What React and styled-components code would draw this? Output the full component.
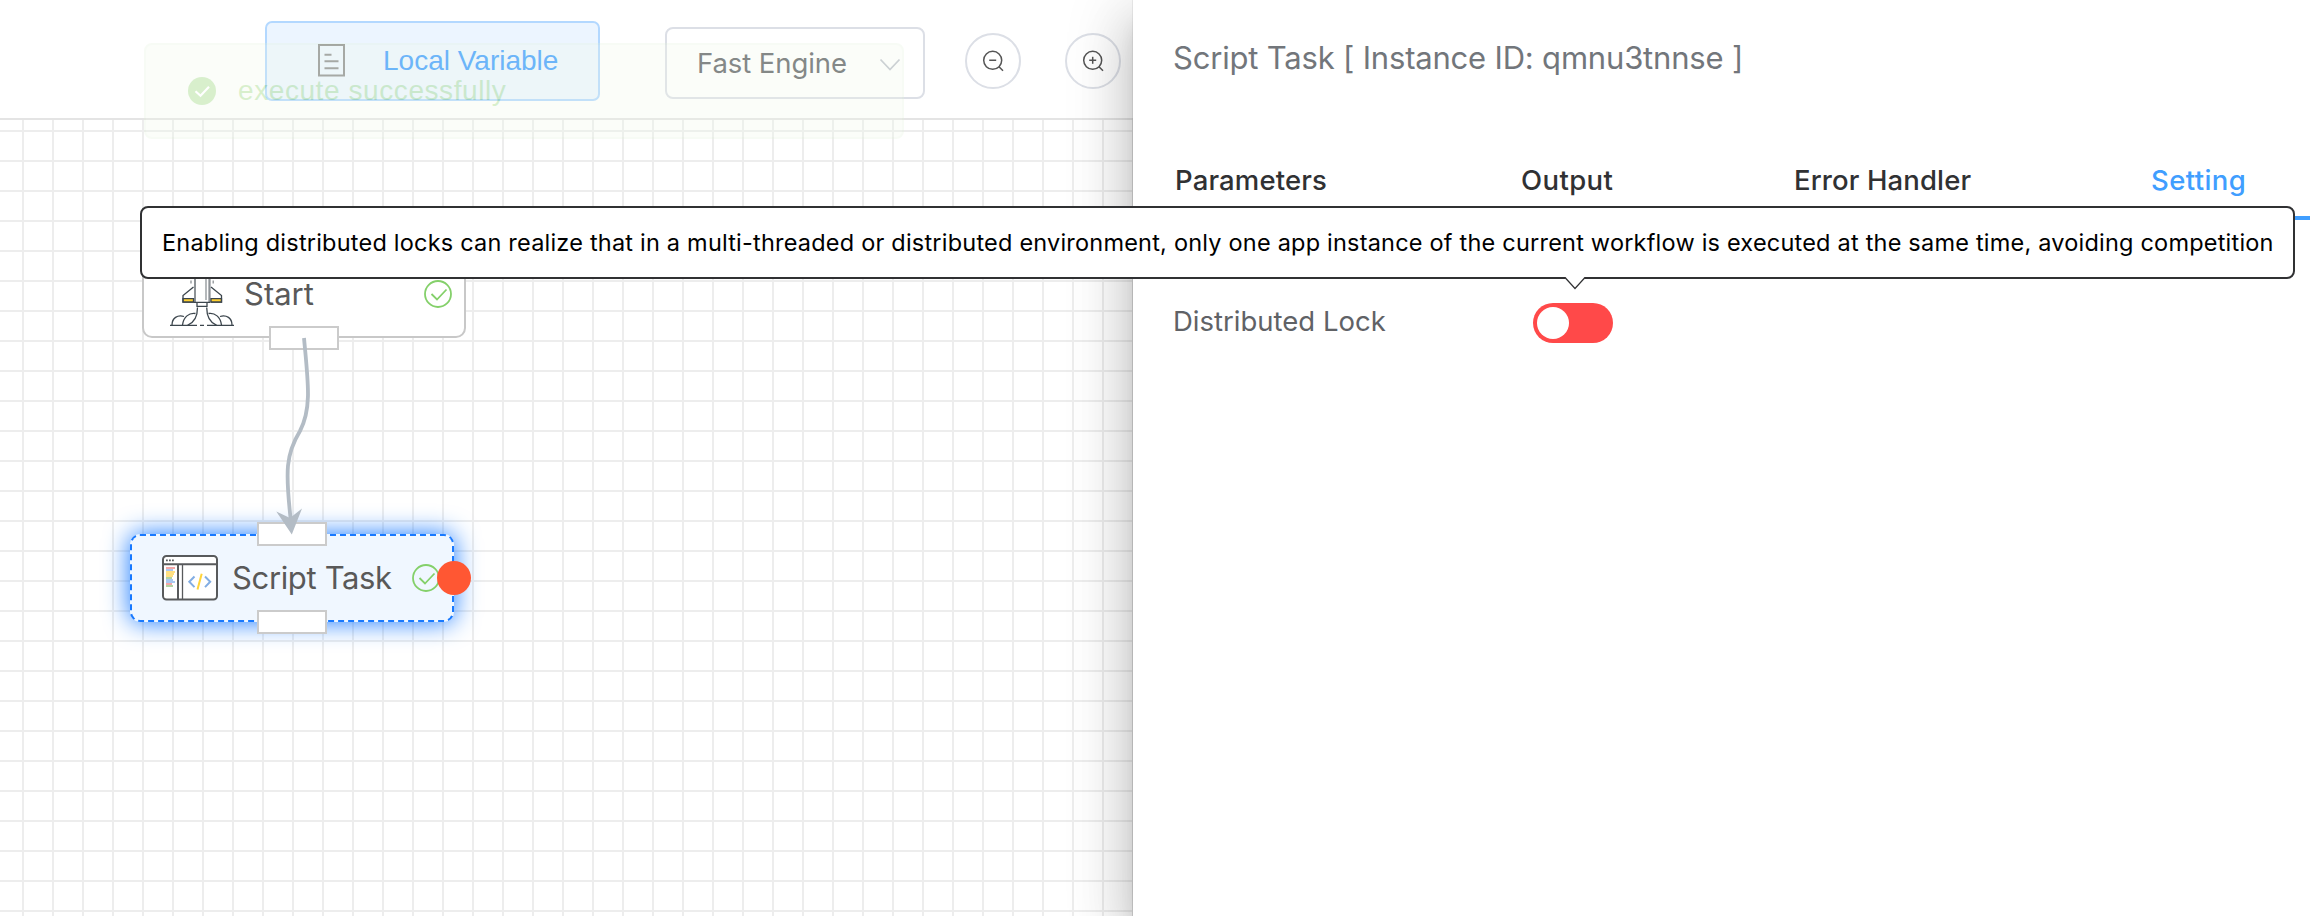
import React from "react";
import styled, { createGlobalStyle, css } from "styled-components";

const GlobalStyle = createGlobalStyle`
  *, *::before, *::after { box-sizing: border-box; }
  body {
    margin: 0;
    background: #fff;
    font-family: Inter, "Liberation Sans", sans-serif;
  }
`;

const Page = styled.div`
  position: relative;
  display: flex;
  width: 2310px;
  height: 916px;
  overflow: hidden;
  background: #fff;
`;

const Workspace = styled.main`
  position: relative;
  display: flex;
  flex-direction: column;
  width: 1133px;
  flex: none;
`;

const Toolbar = styled.header`
  display: flex;
  align-items: center;
  height: 120px;
  padding: 4px 0 0 265px;
  border-bottom: 2px solid #e4e4e4;
  background: #fff;
`;

const VariableButton = styled.button`
  display: flex;
  align-items: center;
  gap: 37px;
  width: 335px;
  height: 80px;
  padding: 0 0 1px 51px;
  border: 2px solid #b3d8ff;
  border-radius: 7px;
  background: #ecf5ff;
  color: #409eff;
  font: 400 28px/32px "Liberation Sans", sans-serif;
  letter-spacing: 0;
  white-space: nowrap;
`;

const EngineSelect = styled.div`
  display: flex;
  align-items: center;
  justify-content: space-between;
  width: 260px;
  height: 72px;
  margin: 4px 0 0 65px;
  padding: 0 22px 0 30px;
  border: 2px solid #dcdfe6;
  border-radius: 8px;
  color: #606266;
  font-size: 27.5px;
  line-height: 34px;
  letter-spacing: -0.08px;
`;

const ZoomControls = styled.div`
  display: flex;
  gap: 44px;
  margin-left: 40px;
`;

const RoundButton = styled.button`
  display: grid;
  place-items: center;
  width: 56px;
  height: 56px;
  padding: 0;
  border: 2px solid #dcdfe6;
  border-radius: 50%;
  background: #fff;
`;

const Canvas = styled.section`
  position: relative;
  flex: 1;
  background-image: linear-gradient(90deg, #ededed 2px, transparent 2px),
    linear-gradient(#ededed 2px, transparent 2px);
  background-size: 30px 30px;
  background-position: 22px 10px;
`;

const Node = styled.div`
  position: absolute;
  left: ${(p) => p.$x}px;
  top: ${(p) => p.$y}px;
  display: flex;
  align-items: center;
  width: 324px;
  height: 88px;
  padding: 0 12px 0 26px;
  border: 2px solid #c8c8c8;
  border-radius: 10px;
  background: #fff;
  ${(p) =>
    p.$selected &&
    css`
      border: 2px dashed #1879ff;
      background: #f0f7ff;
      box-shadow: 0 0 26px #1879ff;
    `}
`;

const NodeLabel = styled.span`
  flex: 1;
  margin-left: 10px;
  color: #595959;
  font-size: 31px;
  line-height: 38px;
  letter-spacing: ${(p) => p.$tracking || 0}px;
  white-space: nowrap;
`;

const Port = styled.i`
  position: absolute;
  left: 125px;
  ${(p) => (p.$side === "top" ? "top: -14px;" : "bottom: -14px;")}
  width: 70px;
  height: 24px;
  border: 2px solid #cbcbcb;
  background: #fff;
`;

const Handle = styled.i`
  position: absolute;
  right: -19px;
  top: 25px;
  width: 34px;
  height: 34px;
  border-radius: 50%;
  background: #ff5733;
`;

const Edge = styled.svg`
  position: absolute;
  left: 260px;
  top: 200px;
`;

const Toast = styled.div`
  position: absolute;
  left: 144px;
  top: 43px;
  display: flex;
  align-items: center;
  gap: 22px;
  width: 760px;
  height: 96px;
  padding-left: 42px;
  border: 2px solid #e1f3d8;
  border-radius: 8px;
  background: #f0f9eb;
  color: #67c23a;
  font: 400 28px/32px "Liberation Sans", sans-serif;
  letter-spacing: 0.58px;
  opacity: 0.25;
`;

const Drawer = styled.aside`
  position: relative;
  flex: 1;
  padding: 42px 0 0 40px;
  background: #fff;
  box-shadow: -1px 0 0 rgba(0, 0, 0, 0.06), 0 16px 20px -10px rgba(0, 0, 0, 0.2),
    0 32px 48px 4px rgba(0, 0, 0, 0.14), 0 12px 60px 10px rgba(0, 0, 0, 0.12);
`;

const DrawerTitle = styled.h1`
  margin: 0 0 66px;
  color: #72767b;
  font-size: 31px;
  font-weight: 400;
  line-height: 32px;
  letter-spacing: -0.19px;
`;

const Tabs = styled.nav`
  display: grid;
  grid-template-columns: 346px 273px 357px 1fr;
  padding-left: 2px;
`;

const Tab = styled.span`
  position: relative;
  height: 80px;
  color: ${(p) => (p.$active ? "#409eff" : "#303133")};
  font-size: 27.5px;
  font-weight: 500;
  line-height: 80px;
  letter-spacing: ${(p) => p.$tracking}px;
  ${(p) => p.$active && css`border-bottom: 4px solid #409eff;`}
`;

const SettingRow = styled.div`
  display: flex;
  align-items: center;
  height: 40px;
  margin-top: 83px;
`;

const SettingLabel = styled.label`
  width: 360px;
  padding-bottom: 5px;
  color: #606266;
  font-size: 27.5px;
  line-height: 34px;
`;

const Switch = styled.span`
  display: flex;
  align-items: center;
  width: 80px;
  height: 40px;
  padding-left: 4px;
  border-radius: 20px;
  background: #ff4949;
  &::before {
    content: "";
    width: 32px;
    height: 32px;
    border-radius: 50%;
    background: #fff;
  }
`;

const Tooltip = styled.div`
  position: absolute;
  left: 140px;
  top: 206px;
  display: flex;
  align-items: center;
  width: 2155px;
  height: 73px;
  padding-left: 20px;
  border: 2px solid #303133;
  border-radius: 8px;
  background: #fff;
  color: #000;
  font-size: 23.5px;
  line-height: 30px;
  letter-spacing: 0.209px;
  white-space: nowrap;
`;

const TooltipArrow = styled.svg`
  position: absolute;
  left: 1422px;
  top: 68px;
`;

const DocumentIcon = () => (
  <svg width="28" height="33" viewBox="0 0 28 33" fill="none" stroke="#8e8e8e" strokeWidth="2">
    <path d="M1 1h25v30.500h-25z M6.500 10.700h7 M6.500 17.300h14 M6.500 24.300h14" />
  </svg>
);

const ChevronIcon = () => (
  <svg width="22" height="22" viewBox="0 -6 22 22" fill="none" stroke="#c0c4cc" strokeWidth="1.800">
    <path d="M1.500 1.500 11 11.500 20.500 1.500" />
  </svg>
);

const ZoomIcon = ({ plus }) => (
  <svg width="24" height="24" viewBox="0 0 24 24" fill="none" stroke="#555" strokeWidth="1.500">
    <circle cx="11.700" cy="11.300" r="9" />
    <path d="M18 17.800l4 4M8.200 11.300h7" />
    {plus && <path d="M11.700 7.800v7" />}
  </svg>
);

const DoneIcon = () => (
  <svg width="28" height="28" viewBox="0 0 28 28" fill="none" stroke="#84d06a" strokeWidth="1.800">
    <circle cx="14" cy="14" r="13" />
    <path d="M7.500 14l5.500 5.500 9.500-10" />
  </svg>
);

const SuccessIcon = () => (
  <svg width="28" height="28" viewBox="0 0 28 28" fill="none">
    <circle cx="14" cy="14" r="14" fill="#67c23a" />
    <path d="M7.500 14.200l5 4.600 8.500-9" stroke="#fff" strokeWidth="2.200" />
  </svg>
);

const RocketIcon = () => (
  <svg width="64" height="64" viewBox="0 0 64 64" fill="none" stroke="#3c464d" strokeWidth="1.300">
    <path d="M25 40V12Q26 4 32 1Q38 4 39.500 12V40" fill="#fff" />
    <path d="M25 12V40M39.500 12V40" stroke="#8d9296" strokeWidth="2" />
    <path d="M36 10V38" stroke="#8d9296" />
    <path d="M21 14v8M43.200 14v8" stroke="#8d9296" strokeDasharray="3 1.500" />
    <path d="M13 36.700h10.500v3.500H13zM41 36.700h10.500v3.500H41z" fill="#ffd02f" />
    <path d="M23.500 25 13 33.500v6.700h11M41 25l10.500 8.500v6.700h-11" />
    <path d="M24 40.300h16M27 40.300h10v4H27z" />
    <path d="M27.500 45.500c0 9-3 15-10 17.800M36.700 45.500c0 9 3 15 10 17.800" />
    <path d="M2 63c0-7 5.500-10.500 12-8.500M62 63c0-7-5.500-10.500-12-8.500" />
    <path d="M12.500 63c1-8 6.500-12.500 13-11.500M51.500 63c-1-8-6.500-12.500-13-11.500" />
    <path d="M0 63.300h27M30 63.300h4M37 63.300h27" />
  </svg>
);

const CODE_LINES = [
  [12, 9, "#f4a7a7"], [14, 7, "#a9c8f0"], [16, 9, "#ffe082"], [18, 8, "#ffe082"],
  [20, 7, "#ffe082"], [22, 6, "#b3d3a1"], [24, 7, "#a9c8f0"], [26, 9, "#a9c8f0"],
  [28, 6, "#f4a7a7"], [30, 7, "#b3d3a1"],
];

const ScriptIcon = () => (
  <svg width="64" height="46" viewBox="-4 0 64 46" fill="none" stroke="#585a5c" strokeWidth="2">
    <rect x="1" y="1" width="54" height="43.500" rx="3.500" fill="#fff" />
    <path d="M1 9.200h54M16 9.200v35" />
    <path d="M20.500 9.200v35" strokeWidth="1.300" />
    <path d="M4 5.300h8" strokeWidth="1.800" strokeDasharray="1.800 1.200" />
    {CODE_LINES.map(([y, width, color]) => (
      <rect key={y} x="4" y={y} width={width} height="2" fill={color} stroke="none" />
    ))}
    <path d="M32.500 21.500l-5.200 5.300 5.200 5.300M43 21.500l5.200 5.300-5.200 5.300" stroke="#82ade3" />
    <path d="M39.700 18.700l-4.200 15.800" stroke="#ffd43b" />
  </svg>
);

const TABS = [
  { label: "Parameters", tracking: 0.15 },
  { label: "Output", tracking: 0.4 },
  { label: "Error Handler", tracking: 0.12 },
  { label: "Setting", tracking: 0.4, active: true },
];

export default function App() {
  return (
    <>
      <GlobalStyle />
      <Page>
        <Workspace>
          <Toolbar>
            <VariableButton>
              <DocumentIcon />
              Local Variable
            </VariableButton>
            <EngineSelect>
              Fast Engine
              <ChevronIcon />
            </EngineSelect>
            <ZoomControls>
              <RoundButton aria-label="Zoom out"><ZoomIcon /></RoundButton>
              <RoundButton aria-label="Zoom in"><ZoomIcon plus /></RoundButton>
            </ZoomControls>
          </Toolbar>
          <Canvas>
            <Node $x={142} $y={130}>
              <RocketIcon />
              <NodeLabel>Start</NodeLabel>
              <DoneIcon />
              <Port $side="bottom" />
            </Node>
            <Node $x={130} $y={414} $selected>
              <ScriptIcon />
              <NodeLabel $tracking={-0.35}>Script Task</NodeLabel>
              <DoneIcon />
              <Port $side="top" />
              <Port $side="bottom" />
              <Handle />
            </Node>
            <Edge width="80" height="230" viewBox="0 0 80 230">
              <path
                d="M44 18C48 62 52 88 40 111C26 134 25 150 31 202"
                fill="none"
                stroke="#b3bcc5"
                strokeWidth="3.800"
              />
              <path d="M31.800 214.500 16.300 191.500 30 198 42 188.500Z" fill="#b3bcc5" />
            </Edge>
          </Canvas>
          <Toast>
            <SuccessIcon />
            execute successfully
          </Toast>
        </Workspace>
        <Drawer>
          <DrawerTitle>Script Task [ Instance ID: qmnu3tnnse ]</DrawerTitle>
          <Tabs>
            {TABS.map((tab) => (
              <Tab key={tab.label} $active={tab.active} $tracking={tab.tracking}>
                {tab.label}
              </Tab>
            ))}
          </Tabs>
          <SettingRow>
            <SettingLabel>Distributed Lock</SettingLabel>
            <Switch role="switch" aria-checked="false" />
          </SettingRow>
        </Drawer>
        <Tooltip role="tooltip">
          Enabling distributed locks can realize that in a multi-threaded or distributed environment, only one app instance of the current workflow is executed at the same time, avoiding competition
          <TooltipArrow width="24" height="14" viewBox="0 0 24 14">
            <path d="M0 0H24V1H20.500L11 12 1.500 1H0Z" fill="#fff" />
            <path d="M1 1.500 11 12.500 21 1.500" fill="#fff" stroke="#303133" strokeWidth="1.200" />
          </TooltipArrow>
        </Tooltip>
      </Page>
    </>
  );
}
